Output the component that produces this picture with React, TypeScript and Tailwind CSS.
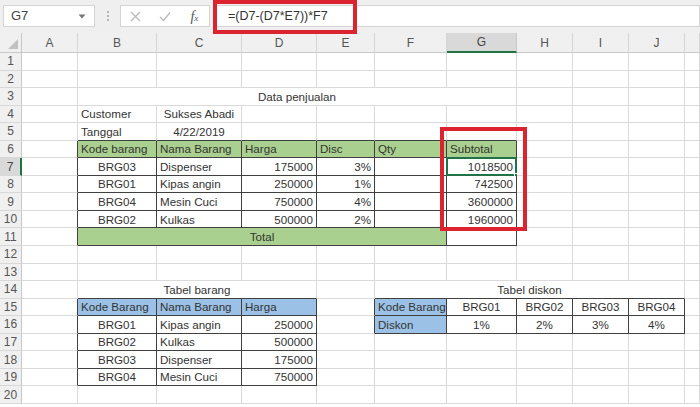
import React from "react";

type Cell = { text?: string; align?: "l" | "c" | "r"; fill?: "g" | "b"; span?: number };

const colLetters = ["A", "B", "C", "D", "E", "F", "G", "H", "I", "J", ""];

const rowsData: Record<number, Record<number, Cell>> = {
  3: { 2: { text: "Data penjualan", align: "c", span: 6 } },
  4: { 2: { text: "Customer" }, 3: { text: "Sukses Abadi", align: "c" } },
  5: { 2: { text: "Tanggal" }, 3: { text: "4/22/2019", align: "c" } },
  6: {
    2: { text: "Kode barang", fill: "g" },
    3: { text: "Nama Barang", fill: "g" },
    4: { text: "Harga", fill: "g" },
    5: { text: "Disc", fill: "g" },
    6: { text: "Qty", fill: "g" },
    7: { text: "Subtotal", fill: "g" },
  },
  7: {
    2: { text: "BRG03", align: "c" },
    3: { text: "Dispenser" },
    4: { text: "175000", align: "r" },
    5: { text: "3%", align: "r" },
    7: { text: "1018500", align: "r" },
  },
  8: {
    2: { text: "BRG01", align: "c" },
    3: { text: "Kipas angin" },
    4: { text: "250000", align: "r" },
    5: { text: "1%", align: "r" },
    7: { text: "742500", align: "r" },
  },
  9: {
    2: { text: "BRG04", align: "c" },
    3: { text: "Mesin Cuci" },
    4: { text: "750000", align: "r" },
    5: { text: "4%", align: "r" },
    7: { text: "3600000", align: "r" },
  },
  10: {
    2: { text: "BRG02", align: "c" },
    3: { text: "Kulkas" },
    4: { text: "500000", align: "r" },
    5: { text: "2%", align: "r" },
    7: { text: "1960000", align: "r" },
  },
  11: { 2: { text: "Total", align: "c", fill: "g", span: 5 } },
  14: {
    2: { text: "Tabel barang", align: "c", span: 3 },
    6: { text: "Tabel diskon", align: "c", span: 5 },
  },
  15: {
    2: { text: "Kode Barang", fill: "b" },
    3: { text: "Nama Barang", fill: "b" },
    4: { text: "Harga", fill: "b" },
    6: { text: "Kode Barang", fill: "b" },
    7: { text: "BRG01", align: "c" },
    8: { text: "BRG02", align: "c" },
    9: { text: "BRG03", align: "c" },
    10: { text: "BRG04", align: "c" },
  },
  16: {
    2: { text: "BRG01", align: "c" },
    3: { text: "Kipas angin" },
    4: { text: "250000", align: "r" },
    6: { text: "Diskon", fill: "b" },
    7: { text: "1%", align: "c" },
    8: { text: "2%", align: "c" },
    9: { text: "3%", align: "c" },
    10: { text: "4%", align: "c" },
  },
  17: { 2: { text: "BRG02", align: "c" }, 3: { text: "Kulkas" }, 4: { text: "500000", align: "r" } },
  18: { 2: { text: "BRG03", align: "c" }, 3: { text: "Dispenser" }, 4: { text: "175000", align: "r" } },
  19: { 2: { text: "BRG04", align: "c" }, 3: { text: "Mesin Cuci" }, 4: { text: "750000", align: "r" } },
};

function inTable(r: number, c: number) {
  if (r >= 6 && r <= 11 && c >= 2 && c <= 7) return true;
  if (r >= 15 && r <= 19 && c >= 2 && c <= 4) return true;
  if (r >= 15 && r <= 16 && c >= 6 && c <= 10) return true;
  return false;
}

const spanCls: Record<number, string> = { 1: "", 3: "col-span-3", 5: "col-span-5", 6: "col-span-6" };
const alignCls = { l: "justify-start pl-[3px]", c: "justify-center", r: "justify-end pr-[3px]" };
const fillCls = { g: "bg-[#a9d08e]", b: "bg-[#9bc2e6]" };

function Row({ r }: { r: number }) {
  const data = rowsData[r] || {};
  const cells: React.ReactNode[] = [];
  const sel = r === 7;
  cells.push(
    <div
      key="h"
      className={
        "flex items-center justify-center text-[12px] border-b border-b-[#d8d8d8] " +
        (sel
          ? "bg-[#d9d9d9] text-[#444] border-r-2 border-r-[#217346]"
          : "bg-[#f0f0f0] text-[#555] border-r border-r-[#c8c8c8]")
      }
    >
      {r}
    </div>
  );
  let c = 1;
  while (c <= 11) {
    const cell = data[c] || {};
    const span = cell.span || 1;
    const last = c + span - 1;
    const rightDark = inTable(r, last) || inTable(r, last + 1);
    let bottomDark = false;
    for (let k = c; k <= last; k++) if (inTable(r, k) || inTable(r + 1, k)) bottomDark = true;
    const cls =
      "relative flex items-center whitespace-nowrap overflow-visible text-[11.6px] text-[#333] border-r border-b " +
      (rightDark ? "border-r-[#404040] " : "border-r-[#dadada] ") +
      (bottomDark ? "border-b-[#404040] " : "border-b-[#dadada] ") +
      (cell.fill ? fillCls[cell.fill] + " " : "bg-white ") +
      alignCls[cell.align || "l"] +
      " " +
      spanCls[span];
    const isG7 = r === 7 && c === 7;
    cells.push(
      <div key={c} className={cls}>
        {cell.text}
        {isG7 && (
          <>
            <div className="absolute -left-px -top-px -right-px -bottom-px border-2 border-[#217346] pointer-events-none" />
            <div className="absolute -right-[3px] -bottom-[3px] w-[5px] h-[5px] bg-[#217346] border border-white" />
          </>
        )}
        {c === 6 && (r === 7 || r === 10) && (
          <div className="absolute right-[3px] top-[8px] w-[3px] h-px bg-[#777]" />
        )}
      </div>
    );
    c += span;
  }
  return <>{cells}</>;
}

export default function App() {
  const rows = Array.from({ length: 20 }, (_, i) => i + 1);
  return (
    <div
      className="relative w-[700px] h-[407px] overflow-hidden bg-white"
      style={{ fontFamily: '"Liberation Sans", Arial, sans-serif' }}
    >
      {/* Formula bar */}
      <div className="h-[33px] bg-[#efefef] flex items-start pt-[5px] pl-[3px]">
        <div className="w-[92px] h-[22px] bg-white border border-[#d4d4d4] flex items-center pl-[7px] pr-[8px] text-[13px] text-[#444]">
          <span className="flex-1">G7</span>
          <svg width="8" height="5" viewBox="0 0 8 5">
            <path d="M0.5 0.5 L4 4.5 L7.5 0.5 Z" fill="#777" />
          </svg>
        </div>
        <div className="w-[25px] h-[22px] flex flex-col items-center justify-center gap-[2px]">
          <div className="w-[2px] h-[2px] bg-[#b5b5b5]" />
          <div className="w-[2px] h-[2px] bg-[#b5b5b5]" />
          <div className="w-[2px] h-[2px] bg-[#b5b5b5]" />
        </div>
        <div className="w-[90px] h-[22px] bg-white border border-[#d4d4d4] flex items-center">
          <div className="w-[30px] flex justify-center">
            <svg width="11" height="11" viewBox="0 0 11 11">
              <path d="M1 1 L10 10 M10 1 L1 10" stroke="#b8b8b8" strokeWidth="1.2" />
            </svg>
          </div>
          <div className="w-[30px] flex justify-center">
            <svg width="12" height="11" viewBox="0 0 12 11">
              <path d="M1 6 L4.5 9.5 L11 1.5" stroke="#b8b8b8" strokeWidth="1.2" fill="none" />
            </svg>
          </div>
          <div
            className="w-[30px] flex justify-center items-baseline text-[#555] italic"
            style={{ fontFamily: '"Liberation Serif", serif' }}
          >
            <span className="text-[14px]">f</span>
            <span className="text-[9px]">x</span>
          </div>
        </div>
        <div className="ml-[3px] flex-1 h-[22px] bg-white border border-[#d4d4d4] flex items-center pl-[14px] text-[12.5px] text-[#333]">
          =(D7-(D7*E7))*F7
        </div>
      </div>

      {/* Column headers */}
      <div className="grid grid-cols-[22px_56px_79px_85px_75px_58px_72px_70px_56px_56px_56px_1fr] h-[20px] bg-[#f0f0f0]">
        <div className="relative border-r border-r-[#c8c8c8] border-b border-b-[#c8c8c8]">
          <svg className="absolute right-[3px] bottom-[3px]" width="10" height="10" viewBox="0 0 10 10">
            <path d="M10 0 L10 10 L0 10 Z" fill="#c2c2c2" />
          </svg>
        </div>
        {colLetters.map((l, i) =>
          l === "G" ? (
            <div
              key={i}
              className="flex items-center justify-center text-[12px] text-[#444] bg-[#d9d9d9] border-r border-r-[#c8c8c8] border-b-2 border-b-[#217346]"
            >
              {l}
            </div>
          ) : (
            <div
              key={i}
              className="flex items-center justify-center text-[12px] text-[#555] border-r border-r-[#d6d6d6] border-b border-b-[#c8c8c8]"
            >
              {l}
            </div>
          )
        )}
      </div>

      {/* Body */}
      <div className="grid grid-cols-[22px_56px_79px_85px_75px_58px_72px_70px_56px_56px_56px_1fr] auto-rows-[17.55px]">
        {rows.map((r) => (
          <Row key={r} r={r} />
        ))}
      </div>

      {/* Annotations */}
      <div className="absolute left-[213px] top-0 w-[144px] h-[34px] border-4 border-[#dc2330] pointer-events-none" />
      <div className="absolute left-[440px] top-[127px] w-[87px] h-[104px] border-4 border-[#dc2330] pointer-events-none" />
    </div>
  );
}
